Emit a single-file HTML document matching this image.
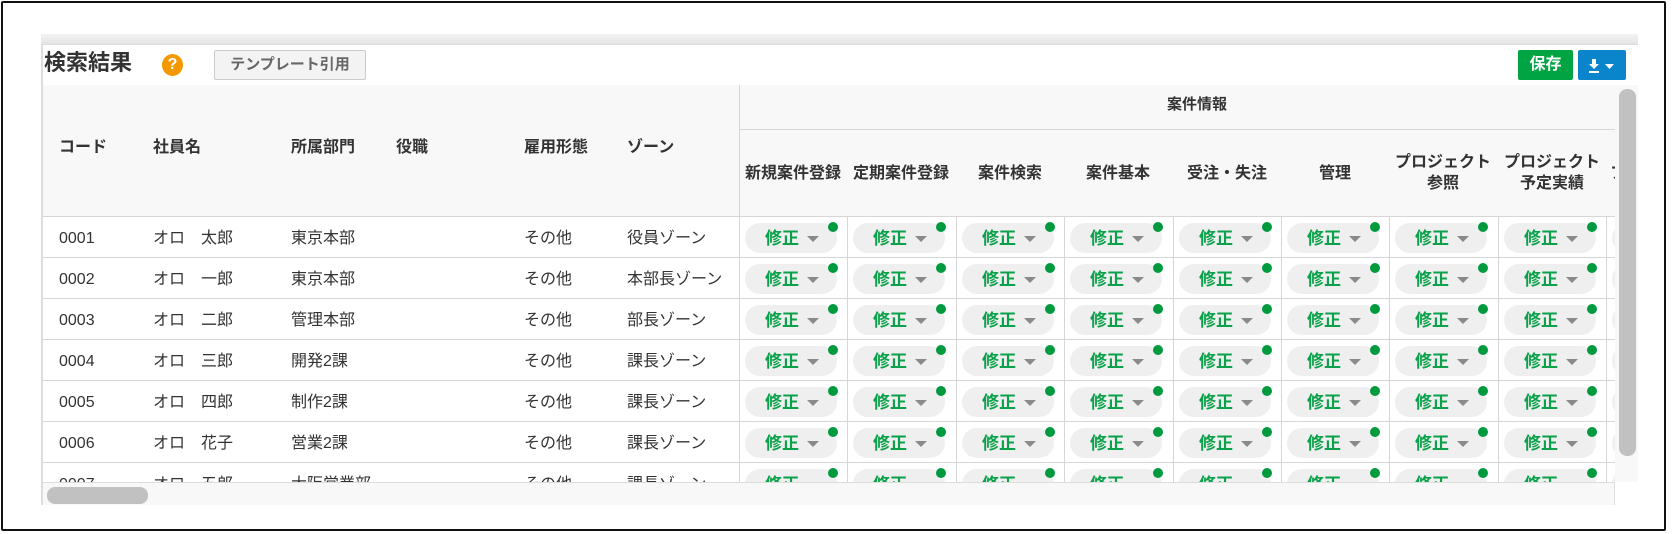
<!DOCTYPE html>
<html><head><meta charset="utf-8"><style>
*{margin:0;padding:0;box-sizing:border-box}
body{width:1674px;height:534px;background:#fff;font-family:"Liberation Sans","Noto Sans CJK JP",sans-serif;position:relative;overflow:hidden;color:#333}
.frame{position:absolute;left:1px;top:1px;width:1665px;height:530px;border:2px solid #111;border-radius:2px}
.topbar{position:absolute;left:41px;top:34px;width:1597px;height:10px;background:linear-gradient(#f3f3f3,#e4e4e4)}
.panel{position:absolute;left:41px;top:44px;width:1597px;height:461px;border-left:2px solid #ddd;border-top:1px solid #ddd}
.title{position:absolute;left:44px;top:50px;font-size:22px;font-weight:bold;color:#333;line-height:26px}
.q{position:absolute;left:162px;top:54px;width:21px;height:22px;border-radius:50%;background:#f39800;color:#fff;font-weight:bold;font-size:16px;text-align:center;line-height:22px}
.tpl{position:absolute;left:214px;top:50px;width:152px;height:30px;border:1px solid #ccc;background:#f3f3f3;color:#666;font-size:15px;font-weight:bold;line-height:28px;text-align:center;border-radius:2px}
.save{position:absolute;left:1518px;top:50px;width:55px;height:30px;background:#00a442;color:#fff;font-weight:bold;font-size:16px;text-align:center;line-height:30px;border-radius:2px}
.dl{position:absolute;left:1578px;top:50px;width:48px;height:30px;background:#0a85cc;border-radius:2px}
.clip{position:absolute;left:43px;top:85px;width:1572px;height:397px;overflow:hidden;background:#fff}
.hd{position:absolute;left:0;top:0;width:1572px;height:132px;background:#f8f8f8;border-bottom:1px solid #d6d6d6}
.hl{position:absolute;top:53px;font-size:16px;font-weight:bold;color:#333;line-height:20px}
.vl{position:absolute;width:1px;background:#d6d6d6}
.hl2{position:absolute;height:1px;background:#d6d6d6}
.ch{position:absolute;top:44px;height:88px;width:108px;display:flex;align-items:center;justify-content:center;text-align:center;font-size:16px;font-weight:bold;line-height:21px;color:#333;white-space:nowrap}
.row{position:absolute;left:0;width:1572px;height:41px;border-bottom:1px solid #d6d6d6;font-size:16px;color:#333}
.row span{position:absolute;top:2px;line-height:40px;height:40px}
.pill{position:absolute;top:6px;width:92px;height:30px;border-radius:15px;background:#efefef}
.pill b{position:absolute;left:20px;top:2px;line-height:28px;color:#0aa14a;font-size:17px}
.pill i{position:absolute;left:62px;top:13px;border-left:6px solid transparent;border-right:6px solid transparent;border-top:6px solid #8a8a8a}
.pill em{position:absolute;left:83px;top:-1px;width:10px;height:10px;border-radius:50%;background:#009a3e}
.vs{position:absolute;left:1615px;top:85px;width:23px;height:397px;background:#f8f8f8}
.vt{position:absolute;left:1619px;top:89px;width:17px;height:367px;background:#c1c1c1;border-radius:8px}
.hs{position:absolute;left:43px;top:482px;width:1572px;height:23px;background:#f8f8f8;border-top:1px solid #ddd;border-right:1px solid #ddd}
.ht{position:absolute;left:47px;top:487px;width:101px;height:17px;background:#c1c1c1;border-radius:8px}
</style></head><body>
<div class="frame"></div>
<div class="topbar"></div>
<div class="panel"></div>
<div class="title">検索結果</div>
<div class="q">?</div>
<div class="tpl">テンプレート引用</div>
<div class="save">保存</div>
<div class="dl"><svg width="48" height="30"><path d="M14 9h4v5h3l-5 5-5-5h3z M11 21h10v2H11z" fill="#fff"/><path d="M27 14h9l-4.5 5z" fill="#fff"/></svg></div>
<div class="clip">
<div class="hd">
<div class="hl" style="left:16px">コード</div>
<div class="hl" style="left:110px">社員名</div>
<div class="hl" style="left:248px">所属部門</div>
<div class="hl" style="left:353px">役職</div>
<div class="hl" style="left:481px">雇用形態</div>
<div class="hl" style="left:584px">ゾーン</div>
<div class="hl" style="left:1124px;top:10px;font-size:15px">案件情報</div>
<div class="vl" style="left:696px;top:0;height:132px"></div>
<div class="hl2" style="left:696px;top:44px;width:900px"></div>
<div class="ch" style="left:696px">新規案件登録</div>
<div class="ch" style="left:804px">定期案件登録</div>
<div class="ch" style="left:913px">案件検索</div>
<div class="ch" style="left:1021px">案件基本</div>
<div class="ch" style="left:1130px">受注・失注</div>
<div class="ch" style="left:1238px">管理</div>
<div class="ch" style="left:1346px">プロジェクト<br>参照</div>
<div class="ch" style="left:1455px">プロジェクト<br>予定実績</div>
<div class="ch" style="left:1563px;justify-content:flex-start">&nbsp;プ</div>
</div>
<div id="rows"></div>
</div>
<div class="vs"></div><div class="vt"></div>
<div class="hs"></div><div class="ht"></div>
<script>
var d=[["0001","オロ　太郎","東京本部","役員ゾーン"],["0002","オロ　一郎","東京本部","本部長ゾーン"],["0003","オロ　二郎","管理本部","部長ゾーン"],["0004","オロ　三郎","開発2課","課長ゾーン"],["0005","オロ　四郎","制作2課","課長ゾーン"],["0006","オロ　花子","営業2課","課長ゾーン"],["0007","オロ　五郎","大阪営業部","課長ゾーン"]];
var cols=[696,804,913,1021,1130,1238,1346,1455,1563];
var h="";
d.forEach(function(r,i){
 var t=132+i*41;
 h+='<div class="row" style="top:'+t+'px"><span style="left:16px">'+r[0]+'</span><span style="left:110px">'+r[1]+'</span><span style="left:248px">'+r[2]+'</span><span style="left:481px">その他</span><span style="left:584px">'+r[3]+'</span>';
 cols.forEach(function(c){h+='<div class="vl" style="left:'+c+'px;top:0;height:41px"></div><div class="pill" style="left:'+(c+6)+'px"><b>修正</b><i></i><em></em></div>';});
 h+='</div>';
});
document.getElementById("rows").innerHTML=h;
</script>
</body></html>
